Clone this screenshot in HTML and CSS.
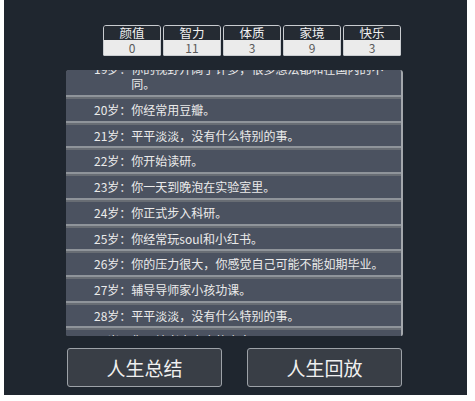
FILE: index.html
```html
<!DOCTYPE html>
<html lang="zh">
<head>
<meta charset="utf-8">
<link rel="stylesheet" href="styles.css">
</head>
<body>
<div class="panel">
  <div class="stats">
    <div class="stat"><div class="stat-label">颜值</div><div class="stat-value">0</div></div>
    <div class="stat"><div class="stat-label">智力</div><div class="stat-value">11</div></div>
    <div class="stat"><div class="stat-label">体质</div><div class="stat-value">3</div></div>
    <div class="stat"><div class="stat-label">家境</div><div class="stat-value">9</div></div>
    <div class="stat"><div class="stat-label">快乐</div><div class="stat-value">3</div></div>
  </div>
  <div class="list">
    <ul class="items">
      <li class="item"><span class="age">19岁<span class="punc">：</span></span><span class="text">你的视野开阔了许多<span class="punc">，</span>很多想法都和在国内的不同。</span></li>
      <li class="item"><span class="age">20岁<span class="punc">：</span></span><span class="text">你经常用豆瓣。</span></li>
      <li class="item"><span class="age">21岁<span class="punc">：</span></span><span class="text">平平淡淡<span class="punc">，</span>没有什么特别的事。</span></li>
      <li class="item"><span class="age">22岁<span class="punc">：</span></span><span class="text">你开始读研。</span></li>
      <li class="item"><span class="age">23岁<span class="punc">：</span></span><span class="text">你一天到晚泡在实验室里。</span></li>
      <li class="item"><span class="age">24岁<span class="punc">：</span></span><span class="text">你正式步入科研。</span></li>
      <li class="item"><span class="age">25岁<span class="punc">：</span></span><span class="text">你经常玩soul和小红书。</span></li>
      <li class="item"><span class="age">26岁<span class="punc">：</span></span><span class="text">你的压力很大<span class="punc">，</span>你感觉自己可能不能如期毕业。</span></li>
      <li class="item"><span class="age">27岁<span class="punc">：</span></span><span class="text">辅导导师家小孩功课。</span></li>
      <li class="item"><span class="age">28岁<span class="punc">：</span></span><span class="text">平平淡淡<span class="punc">，</span>没有什么特别的事。</span></li>
      <li class="item"><span class="age">29岁<span class="punc">：</span></span><span class="text">你开始考虑未来的方向。</span></li>
    </ul>
  </div>
  <div class="buttons">
    <button class="btn">人生总结</button>
    <button class="btn">人生回放</button>
  </div>
</div>
</body>
</html>
```
FILE: styles.css
```css
html, body {
  margin: 0;
  padding: 0;
  background: #ffffff;
}
body {
  font-family: "Noto Sans CJK SC", "Noto Sans", sans-serif;
}
.panel {
  margin-left: 4px;
  width: 463px;
  height: 395px;
  box-sizing: border-box;
  background: #1f262f;
  padding: 25px 0 0 62px;
  display: flex;
  flex-direction: column;
}
.stats {
  display: flex;
  gap: 2px;
  margin-left: 37px;
}
.stat {
  width: 58px;
  box-sizing: border-box;
  border: 1px solid #c9ccd0;
  border-radius: 3px 3px 1px 1px;
}
.stat-label {
  height: 14px;
  line-height: 14px;
  background: #252b33;
  color: #f2f2f2;
  font-size: 12.5px;
  text-align: center;
  border-radius: 2px 2px 0 0;
}
.stat-value {
  height: 15px;
  line-height: 15px;
  background: #ebebeb;
  color: #5a5a5a;
  font-size: 12px;
  text-align: center;
}
.list {
  margin-top: 14px;
  width: 337px;
  height: 266px;
  box-sizing: border-box;
  overflow: hidden;
  background: #686d74;
  border-right: 2px solid #a3a7ac;
  border-radius: 3px 3px 2px 2px;
}
.items {
  list-style: none;
  margin: -12.4px 0 0 0;
  padding: 0;
}
.item {
  display: flex;
  padding: 3px 8px 3px 28px;
  line-height: 15.7px;
  font-size: 12px;
  color: #ebebeb;
  background: #4b5260;
  border-bottom: 2px solid #8f949a;
  margin-bottom: 2px;
}
.age {
  flex: none;
}
.punc {
  font-family: "Noto Sans CJK TC", "Noto Sans CJK SC", sans-serif;
}
.text {
  flex: 1;
}
.buttons {
  margin-top: 12px;
  display: flex;
  gap: 25px;
  padding-left: 1px;
}
.btn {
  width: 155px;
  height: 39px;
  box-sizing: border-box;
  border: 1px solid #9da2a8;
  border-radius: 3px;
  background: #393e46;
  color: #f0f0f0;
  font-family: "Noto Sans CJK SC", "Noto Sans", sans-serif;
  font-size: 19px;
  padding: 0;
}
```
